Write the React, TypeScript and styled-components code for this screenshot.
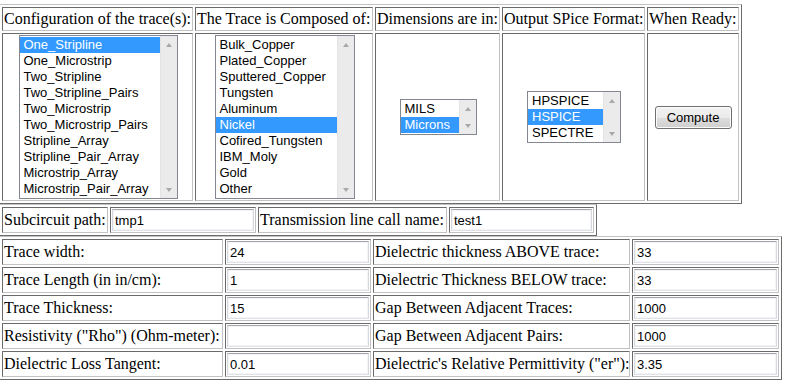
import React, { FC, useState } from "react";
import styled, { createGlobalStyle } from "styled-components";

const GlobalStyle = createGlobalStyle`
  body {
    margin: 0;
    background: #ffffff;
    color: #000000;
    font-family: "Liberation Serif", "Times New Roman", serif;
    font-size: 16px;
  }
`;

const DARK = "#6a6a6a";
const LIGHT = "#c2c2c2";

const Page = styled.form`
  display: flex;
  flex-direction: column;
  align-items: flex-start;
  padding-top: 4px;
  margin-left: -1px;
`;

const Table = styled.div<{ $cols: string; $rows: string }>`
  display: grid;
  grid-template-columns: ${(p) => p.$cols};
  grid-template-rows: ${(p) => p.$rows};
  gap: 2px;
  padding: 2px;
  border: 1px solid;
  border-color: ${LIGHT} ${DARK} ${DARK} ${LIGHT};
`;

const Cell = styled.div<{ $center?: boolean }>`
  display: flex;
  align-items: center;
  justify-content: ${(p) => (p.$center ? "center" : "flex-start")};
  padding: 1px;
  border: 1px solid;
  border-color: ${DARK} ${LIGHT} ${LIGHT} ${DARK};
  white-space: nowrap;
  min-width: 0;
`;

const TextInput = styled.input`
  box-sizing: border-box;
  width: 100%;
  height: 100%;
  margin: 0;
  padding: 0 2px;
  border: 1px solid;
  border-color: #a4a6ad #d5d8de #dfe3e9 #d5d8de;
  box-shadow: inset 0 0 0 1px #f4f4f4;
  font-family: "Liberation Sans", Arial, sans-serif;
  font-size: 13px;
  color: #000000;
  background: #ffffff;
  outline: none;
`;

const ListBox = styled.div<{ $width: number }>`
  display: flex;
  width: ${(p) => p.$width}px;
  margin-left: 1px;
  border: 1px solid #828790;
  background: #ffffff;
  font-family: "Liberation Sans", Arial, sans-serif;
  font-size: 13px;
`;

const ListItems = styled.div`
  flex: 1;
  min-width: 0;
  padding: 1px 0;
`;

const Item = styled.div<{ $selected: boolean }>`
  height: 16px;
  line-height: 16px;
  padding-left: 4px;
  overflow: hidden;
  white-space: nowrap;
  cursor: default;
  background: ${(p) => (p.$selected ? "#3399ff" : "transparent")};
  color: ${(p) => (p.$selected ? "#ffffff" : "#000000")};
`;

const ScrollBar = styled.div`
  width: 17px;
  display: flex;
  flex-direction: column;
  justify-content: space-between;
  background: #ebebeb;
  border-left: 1px solid #e4e4e4;
  box-sizing: border-box;
`;

const ArrowButton = styled.div<{ $down?: boolean }>`
  height: 17px;
  flex-shrink: 1;
  display: flex;
  align-items: center;
  justify-content: center;

  &::after {
    content: "";
    border-left: 3.5px solid transparent;
    border-right: 3.5px solid transparent;
    ${(p) =>
      p.$down
        ? "border-top: 4px solid #a8a8a8;"
        : "border-bottom: 4px solid #a8a8a8;"}
  }
`;

const Button = styled.button`
  width: 77px;
  height: 23px;
  padding: 0;
  border: 1px solid #707070;
  border-radius: 3px;
  background: linear-gradient(#f2f2f2 0%, #ebebeb 50%, #dddddd 51%, #cfcfcf 100%);
  box-shadow: inset 0 0 0 1px #fcfcfc;
  font-family: "Liberation Sans", Arial, sans-serif;
  font-size: 13px;
  color: #000000;
`;

type ListProps = {
  items: string[];
  initial: number;
  width: number;
};

const SelectList: FC<ListProps> = ({ items, initial, width }) => {
  const [selected, setSelected] = useState(initial);
  return (
    <ListBox $width={width}>
      <ListItems>
        {items.map((item, i) => (
          <Item key={item} $selected={i === selected} onClick={() => setSelected(i)}>
            {item}
          </Item>
        ))}
      </ListItems>
      <ScrollBar>
        <ArrowButton />
        <ArrowButton $down />
      </ScrollBar>
    </ListBox>
  );
};

const configs = [
  "One_Stripline",
  "One_Microstrip",
  "Two_Stripline",
  "Two_Stripline_Pairs",
  "Two_Microstrip",
  "Two_Microstrip_Pairs",
  "Stripline_Array",
  "Stripline_Pair_Array",
  "Microstrip_Array",
  "Microstrip_Pair_Array",
];

const materials = [
  "Bulk_Copper",
  "Plated_Copper",
  "Sputtered_Copper",
  "Tungsten",
  "Aluminum",
  "Nickel",
  "Cofired_Tungsten",
  "IBM_Moly",
  "Gold",
  "Other",
];

const params: [string, string, string, string][] = [
  ["Trace width:", "24", "Dielectric thickness ABOVE trace:", "33"],
  ["Trace Length (in in/cm):", "1", "Dielectric Thickness BELOW trace:", "33"],
  ["Trace Thickness:", "15", "Gap Between Adjacent Traces:", "1000"],
  ['Resistivity ("Rho") (Ohm-meter):', "", "Gap Between Adjacent Pairs:", "1000"],
  ["Dielectric Loss Tangent:", "0.01", 'Dielectric\'s Relative Permittivity ("er"):', "3.35"],
];

const App: FC = () => {
  return (
    <>
      <GlobalStyle />
      <Page onSubmit={(e) => e.preventDefault()}>
        <Table $cols="191px 178px 125px 143px 92px" $rows="24px 168px">
          <Cell>Configuration of the trace(s):</Cell>
          <Cell>The Trace is Composed of:</Cell>
          <Cell>Dimensions are in:</Cell>
          <Cell>Output SPice Format:</Cell>
          <Cell>When Ready:</Cell>

          <Cell $center>
            <SelectList items={configs} initial={0} width={157} />
          </Cell>
          <Cell $center>
            <SelectList items={materials} initial={5} width={138} />
          </Cell>
          <Cell $center>
            <SelectList items={["MILS", "Microns"]} initial={1} width={75} />
          </Cell>
          <Cell $center>
            <SelectList items={["HPSPICE", "HSPICE", "SPECTRE"]} initial={1} width={92} />
          </Cell>
          <Cell $center>
            <Button type="submit">Compute</Button>
          </Cell>
        </Table>

        <Table $cols="106px 146px 189px 145px" $rows="26px">
          <Cell>Subcircuit path:</Cell>
          <Cell>
            <TextInput defaultValue="tmp1" />
          </Cell>
          <Cell>Transmission line call name:</Cell>
          <Cell>
            <TextInput defaultValue="test1" />
          </Cell>
        </Table>

        <Table $cols="221px 146px 257px 147px" $rows="repeat(5, 26px)">
          {params.map(([leftLabel, leftValue, rightLabel, rightValue]) => (
            <React.Fragment key={leftLabel}>
              <Cell>{leftLabel}</Cell>
              <Cell>
                <TextInput defaultValue={leftValue} />
              </Cell>
              <Cell>{rightLabel}</Cell>
              <Cell>
                <TextInput defaultValue={rightValue} />
              </Cell>
            </React.Fragment>
          ))}
        </Table>
      </Page>
    </>
  );
};

export default App;
